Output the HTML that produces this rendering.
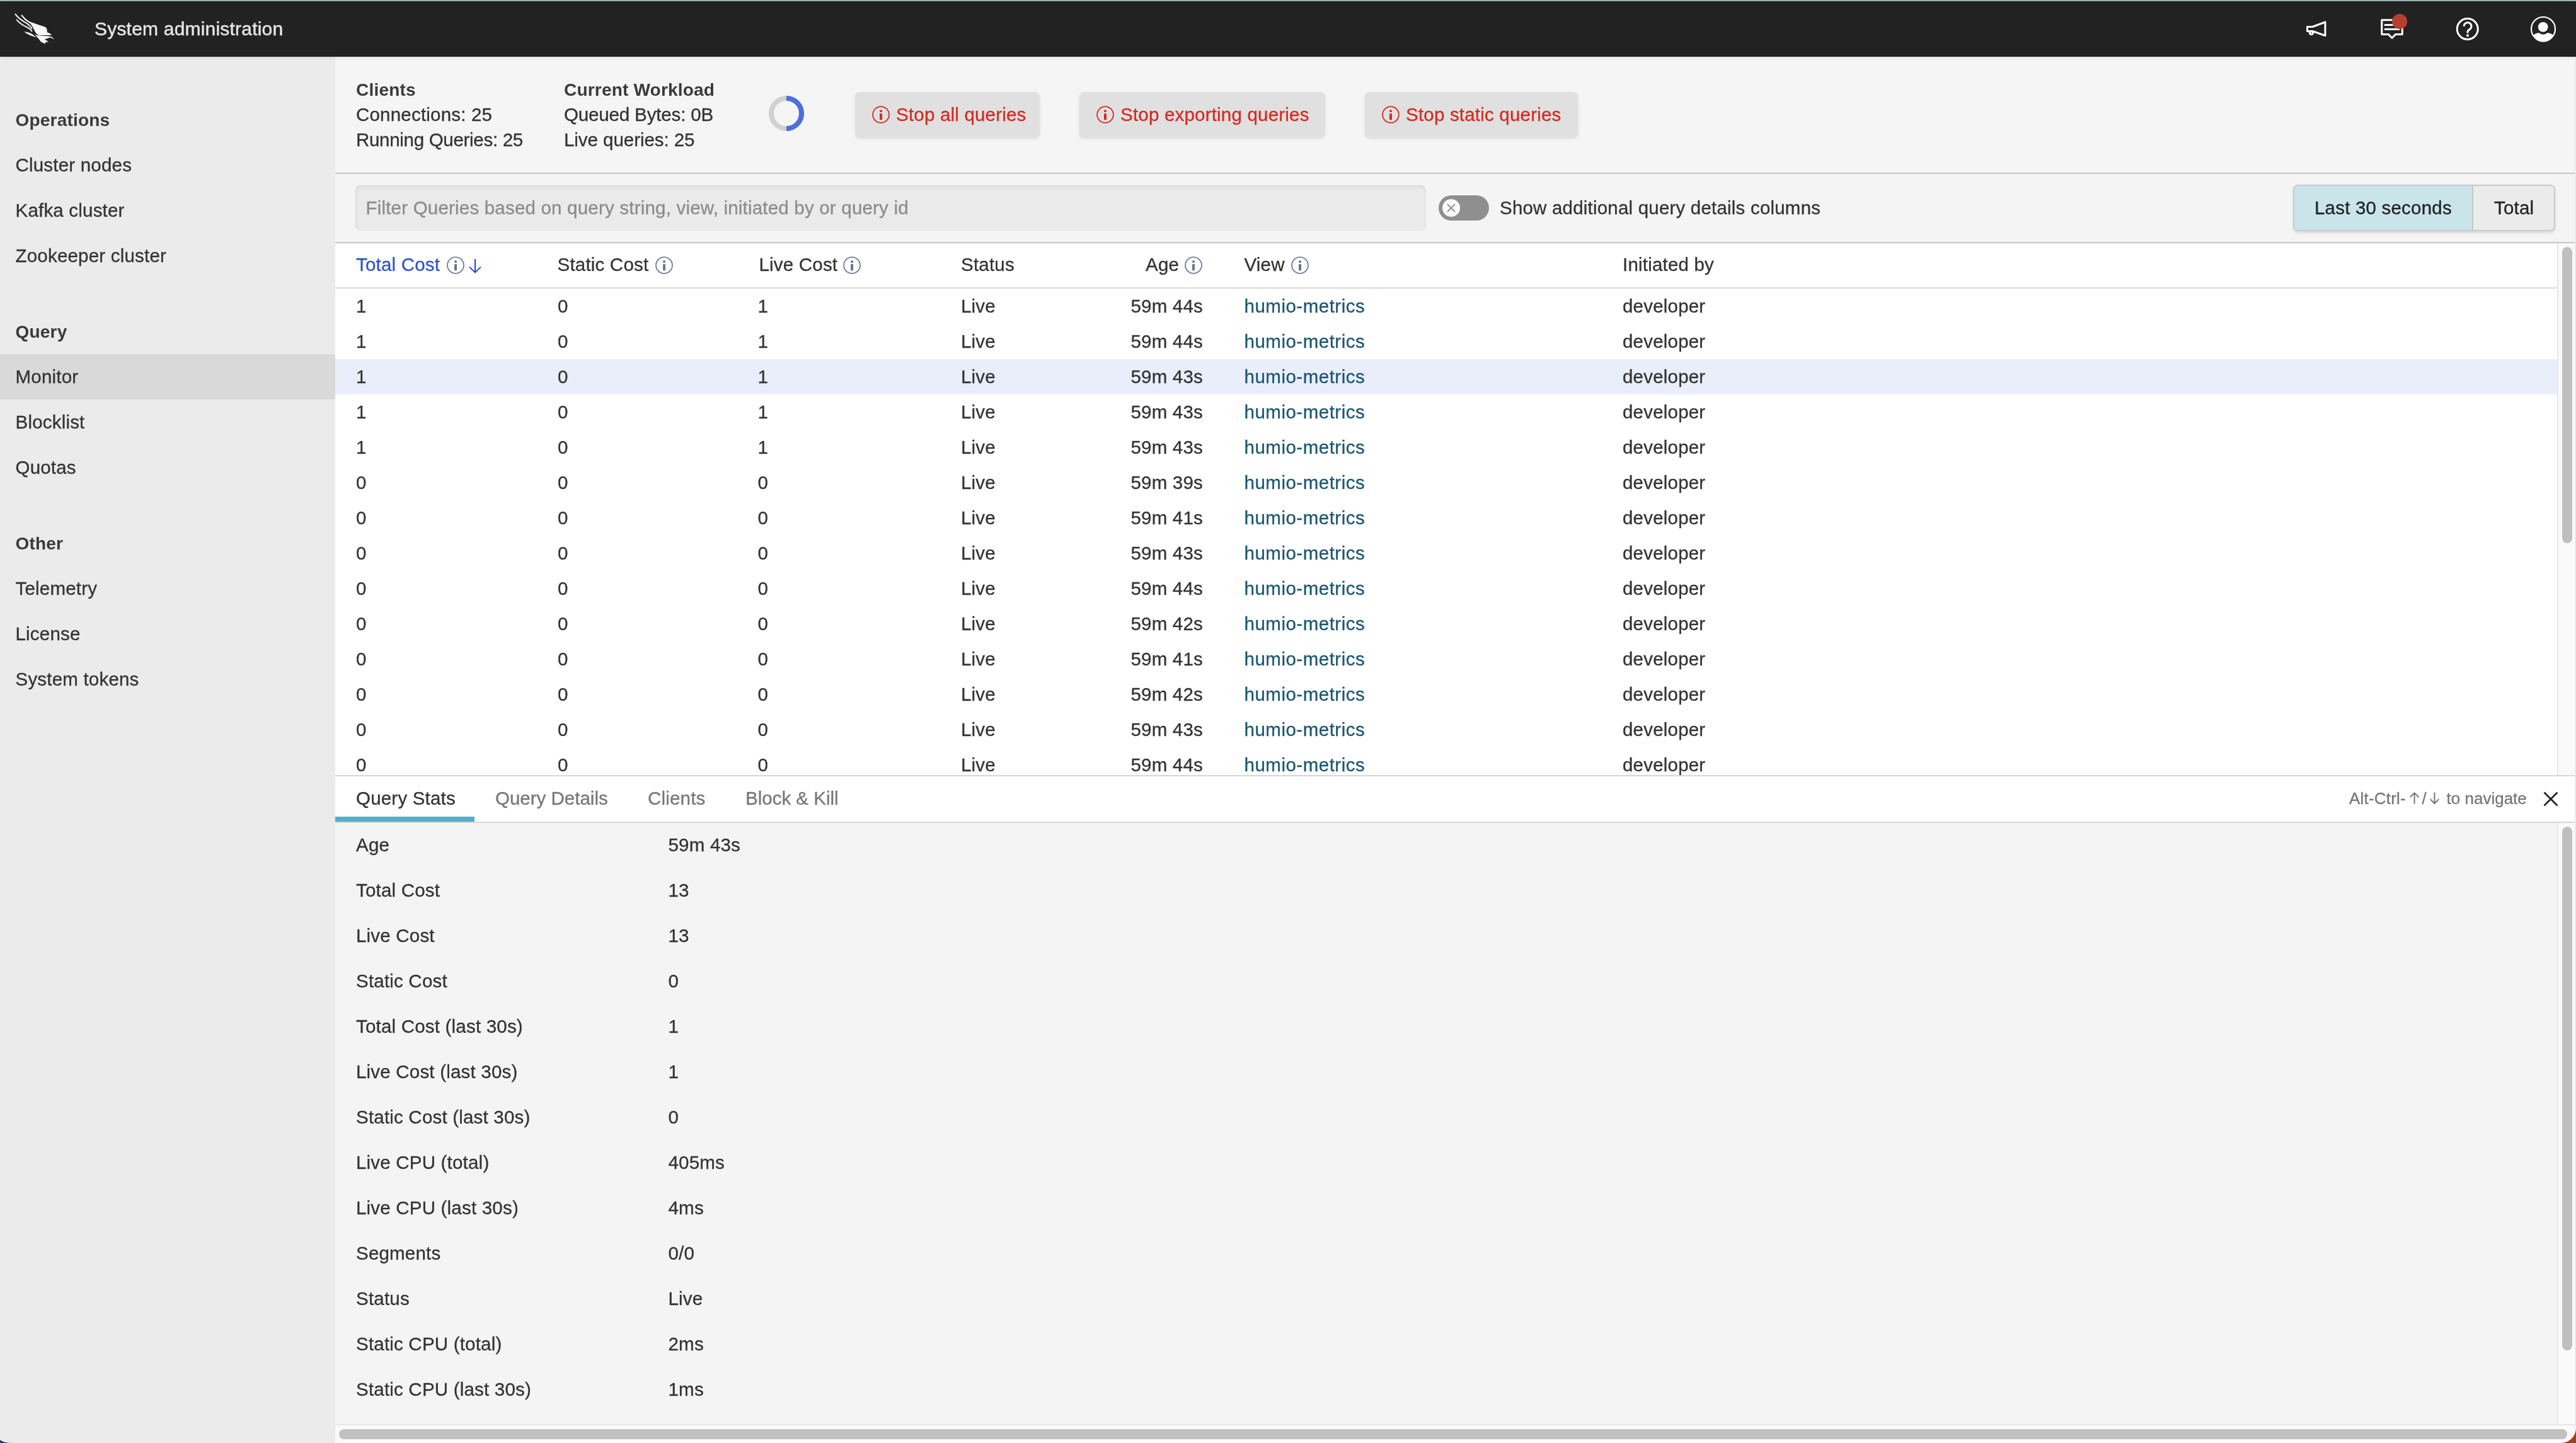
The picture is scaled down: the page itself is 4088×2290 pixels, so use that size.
<!DOCTYPE html>
<html><head><meta charset="utf-8"><title>System administration</title><style>
*{box-sizing:border-box;margin:0;padding:0}
html,body{width:4088px;height:2290px;overflow:hidden;background:#f5f5f5;font-family:"Liberation Sans",sans-serif;color:#333;font-size:29.5px;letter-spacing:0.2px}
.a{position:absolute}
.t{position:absolute;white-space:nowrap;-webkit-text-stroke:0.3px currentColor}
svg{position:absolute;overflow:visible}
</style></head><body>
<div id="root" style="position:absolute;left:0;top:0;width:4088px;height:2290px;overflow:hidden;will-change:transform">
<div class="a" style="left:0;top:0;width:4088px;height:2px;background:#a0b7ba"></div>
<div class="a" style="left:0;top:90px;width:532px;height:2200px;background:#ebebeb"></div>
<div class="a" style="left:532px;top:90px;width:3556px;height:184px;background:#f5f5f5"></div>
<div class="a" style="left:532px;top:274px;width:3556px;height:2px;background:#c6c6c6"></div>
<div class="a" style="left:532px;top:276px;width:3556px;height:108px;background:#f4f4f4"></div>
<div class="a" style="left:532px;top:384px;width:3556px;height:2px;background:#c6c6c6"></div>
<div class="a" style="left:532px;top:386px;width:3556px;height:844px;background:#fff"></div>
<div class="a" style="left:532px;top:456px;width:3526px;height:2px;background:#dcdcdc"></div>
<div class="a" style="left:532px;top:570px;width:3526px;height:56px;background:#eaeefb"></div>
<div class="a" style="left:4058px;top:386px;width:30px;height:844px;background:#fafafa;border-left:2px solid #e6e6e6"></div>
<div class="a" style="left:4066px;top:392px;width:16px;height:470px;background:#bfbfbf;border-radius:8px"></div>
<div class="a" style="left:532px;top:1230px;width:3556px;height:2px;background:#d6d6d6"></div>
<div class="a" style="left:532px;top:1232px;width:3556px;height:72px;background:#fff"></div>
<div class="a" style="left:532px;top:1304px;width:3556px;height:2px;background:#d6d6d6"></div>
<div class="a" style="left:532px;top:1296px;width:221px;height:8px;background:#55adc8"></div>
<div class="a" style="left:532px;top:1306px;width:3556px;height:954px;background:#f4f4f4"></div>
<div class="a" style="left:4058px;top:1306px;width:30px;height:954px;background:#fafafa;border-left:2px solid #e6e6e6"></div>
<div class="a" style="left:4066px;top:1312px;width:16px;height:831px;background:#bfbfbf;border-radius:8px"></div>
<div class="a" style="left:532px;top:2260px;width:3556px;height:30px;background:#fafafa;border-top:2px solid #e6e6e6"></div>
<div class="a" style="left:538px;top:2268px;width:3536px;height:16px;background:#c1c1c1;border-radius:8px"></div>
<div class="a" style="left:4086px;top:90px;width:2px;height:2176px;background:#ebebeb"></div>
<div class="a" style="left:0;top:2px;width:4088px;height:88px;background:#222;border-top:1px solid #1b1b1b;border-bottom:1px solid #161616;box-shadow:0 1px 6px rgba(0,0,0,.13)"></div>
<div class="t" style="left:150px;top:15.61px;font-size:30px;line-height:60px;height:60px;color:#e6e6e6;-webkit-text-stroke:0.45px #e6e6e6;letter-spacing:0.2px">System administration</div>

<svg style="left:16px;top:16px" width="80" height="60" viewBox="0 0 1924 1443" fill="#f8f8f8">
<g fill="none" stroke="#f8f8f8" stroke-linecap="round">
<path d="M200,155 Q330,330 560,460 Q760,570 825,700" stroke-width="48"/>
<path d="M445,200 Q540,340 700,440 Q800,500 860,530" stroke-width="50"/>
<path d="M255,375 Q400,540 620,640 Q770,710 830,805" stroke-width="46"/>
</g>
<path d="M720,430 Q1000,530 1350,650 Q1420,700 1415,850 Q1530,880 1600,950 Q1440,960 1120,960 Q1010,940 950,820 Q870,620 720,430 Z"/>
<path d="M940,925 Q1060,990 1450,990 Q1570,1000 1620,1040 Q1665,1090 1680,1125 Q1610,1060 1540,1045 Q1400,1080 1310,1130 Q1440,1160 1465,1235 Q1400,1205 1345,1225 Q1355,1270 1335,1295 Q1250,1240 1180,1215 Q1100,1100 940,925 Z"/>
<path d="M530,815 Q720,850 820,900 Q920,960 1005,1050 Q880,1000 760,960 Q620,900 530,815 Z"/>
</svg>
<svg style="left:0;top:0" width="4088" height="90" viewBox="0 0 4088 90" fill="none" stroke="#fff" stroke-width="3" stroke-linejoin="round">
<path d="M3661.5,42.5 H3670 L3690,35 V56.5 L3670,49.5 H3661.5 Z"/>
<ellipse cx="3668" cy="52.3" rx="2.6" ry="2.2"/>
<path d="M3779.8,31.7 H3812.3 V54.4 H3801.8 L3796,60.2 L3790.2,54.4 H3779.8 Z"/>
<line x1="3783.8" y1="39.6" x2="3800" y2="39.6"/>
<line x1="3783.8" y1="46.4" x2="3808.3" y2="46.4"/>
<circle cx="3915.8" cy="46" r="16.5"/>
<path d="M3910.2,41.8 A5.9,5.9 0 1 1 3919.6,46.4 Q3916,48.6 3916,51 V52.6"/>
<circle cx="4036" cy="46" r="19" stroke-width="2.2"/>
</svg>
<svg style="left:0;top:0" width="4088" height="90" viewBox="0 0 4088 90" fill="#fff">
<rect x="3914.2" y="54.6" width="3.6" height="3.6"/>
<circle cx="3808.1" cy="34" r="12.1" fill="#b5402f"/>
<circle cx="4035.7" cy="42.9" r="7.9"/>
<path d="M4019.4,56.3 Q4024,52.5 4029,52 Q4036,57.5 4043,52 Q4048,52.5 4052.6,56.3 A18.4,18.4 0 0 1 4019.4,56.3 Z"/>
</svg>
<div class="t" style="left:24.5px;top:161.30px;font-size:28px;line-height:60px;height:60px;font-weight:700;-webkit-text-stroke:0;color:#3a3a3a">Operations</div>

<div class="t" style="left:24.5px;top:231.78px;font-size:29.5px;line-height:60px;height:60px">Cluster nodes</div>

<div class="t" style="left:24.5px;top:303.78px;font-size:29.5px;line-height:60px;height:60px">Kafka cluster</div>

<div class="t" style="left:24.5px;top:375.78px;font-size:29.5px;line-height:60px;height:60px">Zookeeper cluster</div>

<div class="t" style="left:24.5px;top:497.30px;font-size:28px;line-height:60px;height:60px;font-weight:700;-webkit-text-stroke:0;color:#3a3a3a">Query</div>

<div class="a" style="left:0;top:562px;width:532px;height:72px;background:#d9d9d9"></div>
<div class="t" style="left:24.5px;top:567.78px;font-size:29.5px;line-height:60px;height:60px">Monitor</div>

<div class="t" style="left:24.5px;top:639.78px;font-size:29.5px;line-height:60px;height:60px">Blocklist</div>

<div class="t" style="left:24.5px;top:711.78px;font-size:29.5px;line-height:60px;height:60px">Quotas</div>

<div class="t" style="left:24.5px;top:833.30px;font-size:28px;line-height:60px;height:60px;font-weight:700;-webkit-text-stroke:0;color:#3a3a3a">Other</div>

<div class="t" style="left:24.5px;top:903.78px;font-size:29.5px;line-height:60px;height:60px">Telemetry</div>

<div class="t" style="left:24.5px;top:975.78px;font-size:29.5px;line-height:60px;height:60px">License</div>

<div class="t" style="left:24.5px;top:1047.78px;font-size:29.5px;line-height:60px;height:60px">System tokens</div>

<div class="t" style="left:565px;top:113.30px;font-size:28px;line-height:60px;height:60px;font-weight:700;-webkit-text-stroke:0;color:#3a3a3a">Clients</div>

<div class="t" style="left:565px;top:151.78px;font-size:29.5px;line-height:60px;height:60px">Connections: 25</div>

<div class="t" style="left:565px;top:191.78px;font-size:29.5px;line-height:60px;height:60px;letter-spacing:-0.3px">Running Queries: 25</div>

<div class="t" style="left:895px;top:113.30px;font-size:28px;line-height:60px;height:60px;font-weight:700;-webkit-text-stroke:0;color:#3a3a3a">Current Workload</div>

<div class="t" style="left:895px;top:151.78px;font-size:29.5px;line-height:60px;height:60px;letter-spacing:-0.15px">Queued Bytes: 0B</div>

<div class="t" style="left:895px;top:191.78px;font-size:29.5px;line-height:60px;height:60px;letter-spacing:-0.05px">Live queries: 25</div>

<svg style="left:1210px;top:140px" width="80" height="80" viewBox="1210 140 80 80" fill="none" stroke-width="8">
<circle cx="1248" cy="180" r="24" stroke="#d1d1d1"/>
<path d="M1248,156 A24,24 0 0 1 1248,204" stroke="#4b6fdb"/>
</svg>
<div class="a" style="left:1357px;top:146px;width:293px;height:72px;background:#e0e0e0;border-radius:8px;box-shadow:0 2px 4px rgba(0,0,0,.11)"></div>
<svg style="left:1382px;top:166px" width="32" height="32" viewBox="1382 166 32 32"><circle cx="1398" cy="182" r="12.9" fill="none" stroke="#d42a20" stroke-width="1.8"/><circle cx="1398" cy="176.2" r="2" fill="#d42a20"/><rect x="1396" y="180.2" width="4" height="10" fill="#d42a20"/></svg>

<div class="t" style="left:1422px;top:151.78px;font-size:29.5px;line-height:60px;height:60px;color:#d42a20">Stop all queries</div>

<div class="a" style="left:1713px;top:146px;width:390px;height:72px;background:#e0e0e0;border-radius:8px;box-shadow:0 2px 4px rgba(0,0,0,.11)"></div>
<svg style="left:1738px;top:166px" width="32" height="32" viewBox="1738 166 32 32"><circle cx="1754" cy="182" r="12.9" fill="none" stroke="#d42a20" stroke-width="1.8"/><circle cx="1754" cy="176.2" r="2" fill="#d42a20"/><rect x="1752" y="180.2" width="4" height="10" fill="#d42a20"/></svg>

<div class="t" style="left:1778px;top:151.78px;font-size:29.5px;line-height:60px;height:60px;color:#d42a20">Stop exporting queries</div>

<div class="a" style="left:2166px;top:146px;width:338px;height:72px;background:#e0e0e0;border-radius:8px;box-shadow:0 2px 4px rgba(0,0,0,.11)"></div>
<svg style="left:2191px;top:166px" width="32" height="32" viewBox="2191 166 32 32"><circle cx="2207" cy="182" r="12.9" fill="none" stroke="#d42a20" stroke-width="1.8"/><circle cx="2207" cy="176.2" r="2" fill="#d42a20"/><rect x="2205" y="180.2" width="4" height="10" fill="#d42a20"/></svg>

<div class="t" style="left:2231px;top:151.78px;font-size:29.5px;line-height:60px;height:60px;color:#d42a20">Stop static queries</div>

<div class="a" style="left:564px;top:294px;width:1699px;height:72px;background:#eaeaea;border-radius:8px;box-shadow:inset 1px 3px 6px rgba(0,0,0,.08)"></div>
<div class="t" style="left:580.5px;top:299.78px;font-size:29.5px;line-height:60px;height:60px;color:#8c8c8c">Filter Queries based on query string, view, initiated by or query id</div>

<div class="a" style="left:2283px;top:310px;width:80px;height:40px;background:#8f8f8f;border-radius:20px"></div>
<svg style="left:2283px;top:310px" width="80" height="40" viewBox="2283 310 80 40">
<circle cx="2303" cy="330" r="14" fill="#fafafa"/>
<path d="M2297,324 L2309,336 M2309,324 L2297,336" stroke="#8f8f8f" stroke-width="1.8"/>
</svg>
<div class="t" style="left:2380px;top:299.78px;font-size:29.5px;line-height:60px;height:60px">Show additional query details columns</div>

<div class="a" style="left:3639px;top:293px;width:416px;height:74px;border:2px solid #c9c9c9;border-radius:8px;background:#ebebeb;box-shadow:0 3px 4px rgba(0,0,0,.10);overflow:hidden"><div class="a" style="left:0;top:0;width:284px;height:70px;background:#c9e5ea;border-right:2px solid #c9c9c9"></div></div>
<div class="t" style="left:3673px;top:299.78px;font-size:29.5px;line-height:60px;height:60px;color:#222">Last 30 seconds</div>

<div class="t" style="left:3958px;top:299.78px;font-size:29.5px;line-height:60px;height:60px;color:#222">Total</div>

<div class="t" style="left:565px;top:389.78px;font-size:29.5px;line-height:60px;height:60px;color:#2f55c8">Total Cost</div>

<svg style="left:707px;top:405px" width="32" height="32" viewBox="707 405 32 32"><circle cx="723" cy="421" r="13" fill="none" stroke="#6b7390" stroke-width="1.7"/><circle cx="723" cy="415.2" r="2" fill="#6b7390"/><rect x="721" y="419.2" width="4" height="10" fill="#6b7390"/></svg>

<svg style="left:740px;top:405px" width="30" height="32" viewBox="740 405 30 32" fill="none" stroke="#2446c5" stroke-width="2">
<path d="M754,411 V432 M745,423.6 L754,432.4 L763,423.6"/></svg>
<div class="t" style="left:884.5px;top:389.78px;font-size:29.5px;line-height:60px;height:60px">Static Cost</div>

<svg style="left:1038px;top:405px" width="32" height="32" viewBox="1038 405 32 32"><circle cx="1054" cy="421" r="13" fill="none" stroke="#6b7390" stroke-width="1.7"/><circle cx="1054" cy="415.2" r="2" fill="#6b7390"/><rect x="1052" y="419.2" width="4" height="10" fill="#6b7390"/></svg>

<div class="t" style="left:1204.5px;top:389.78px;font-size:29.5px;line-height:60px;height:60px">Live Cost</div>

<svg style="left:1336px;top:405px" width="32" height="32" viewBox="1336 405 32 32"><circle cx="1352" cy="421" r="13" fill="none" stroke="#6b7390" stroke-width="1.7"/><circle cx="1352" cy="415.2" r="2" fill="#6b7390"/><rect x="1350" y="419.2" width="4" height="10" fill="#6b7390"/></svg>

<div class="t" style="left:1525px;top:389.78px;font-size:29.5px;line-height:60px;height:60px">Status</div>

<div class="t" style="left:1818px;top:389.78px;font-size:29.5px;line-height:60px;height:60px">Age</div>

<svg style="left:1878px;top:405px" width="32" height="32" viewBox="1878 405 32 32"><circle cx="1894" cy="421" r="13" fill="none" stroke="#6b7390" stroke-width="1.7"/><circle cx="1894" cy="415.2" r="2" fill="#6b7390"/><rect x="1892" y="419.2" width="4" height="10" fill="#6b7390"/></svg>

<div class="t" style="left:1974.5px;top:389.78px;font-size:29.5px;line-height:60px;height:60px">View</div>

<svg style="left:2047px;top:405px" width="32" height="32" viewBox="2047 405 32 32"><circle cx="2063" cy="421" r="13" fill="none" stroke="#6b7390" stroke-width="1.7"/><circle cx="2063" cy="415.2" r="2" fill="#6b7390"/><rect x="2061" y="419.2" width="4" height="10" fill="#6b7390"/></svg>

<div class="t" style="left:2575px;top:389.78px;font-size:29.5px;line-height:60px;height:60px">Initiated by</div>

<div class="a" style="left:0;top:458px;width:4058px;height:772px;overflow:hidden"><div class="a" style="left:0;top:-458px;width:4088px;height:2290px"><div class="t" style="left:565px;top:455.78px;font-size:29.5px;line-height:60px;height:60px">1</div>
<div class="t" style="left:885px;top:455.78px;font-size:29.5px;line-height:60px;height:60px">0</div>
<div class="t" style="left:1202.5px;top:455.78px;font-size:29.5px;line-height:60px;height:60px">1</div>
<div class="t" style="left:1525px;top:455.78px;font-size:29.5px;line-height:60px;height:60px">Live</div>
<div class="t" style="right:2179px;top:455.78px;font-size:29.5px;line-height:60px;height:60px;text-align:right">59m 44s</div>
<div class="t" style="left:1974.5px;top:455.78px;font-size:29.5px;line-height:60px;height:60px;color:#1c5770;letter-spacing:0.5px">humio-metrics</div>
<div class="t" style="left:2575px;top:455.78px;font-size:29.5px;line-height:60px;height:60px">developer</div>
<div class="t" style="left:565px;top:511.78px;font-size:29.5px;line-height:60px;height:60px">1</div>
<div class="t" style="left:885px;top:511.78px;font-size:29.5px;line-height:60px;height:60px">0</div>
<div class="t" style="left:1202.5px;top:511.78px;font-size:29.5px;line-height:60px;height:60px">1</div>
<div class="t" style="left:1525px;top:511.78px;font-size:29.5px;line-height:60px;height:60px">Live</div>
<div class="t" style="right:2179px;top:511.78px;font-size:29.5px;line-height:60px;height:60px;text-align:right">59m 44s</div>
<div class="t" style="left:1974.5px;top:511.78px;font-size:29.5px;line-height:60px;height:60px;color:#1c5770;letter-spacing:0.5px">humio-metrics</div>
<div class="t" style="left:2575px;top:511.78px;font-size:29.5px;line-height:60px;height:60px">developer</div>
<div class="t" style="left:565px;top:567.78px;font-size:29.5px;line-height:60px;height:60px">1</div>
<div class="t" style="left:885px;top:567.78px;font-size:29.5px;line-height:60px;height:60px">0</div>
<div class="t" style="left:1202.5px;top:567.78px;font-size:29.5px;line-height:60px;height:60px">1</div>
<div class="t" style="left:1525px;top:567.78px;font-size:29.5px;line-height:60px;height:60px">Live</div>
<div class="t" style="right:2179px;top:567.78px;font-size:29.5px;line-height:60px;height:60px;text-align:right">59m 43s</div>
<div class="t" style="left:1974.5px;top:567.78px;font-size:29.5px;line-height:60px;height:60px;color:#1c5770;letter-spacing:0.5px">humio-metrics</div>
<div class="t" style="left:2575px;top:567.78px;font-size:29.5px;line-height:60px;height:60px">developer</div>
<div class="t" style="left:565px;top:623.78px;font-size:29.5px;line-height:60px;height:60px">1</div>
<div class="t" style="left:885px;top:623.78px;font-size:29.5px;line-height:60px;height:60px">0</div>
<div class="t" style="left:1202.5px;top:623.78px;font-size:29.5px;line-height:60px;height:60px">1</div>
<div class="t" style="left:1525px;top:623.78px;font-size:29.5px;line-height:60px;height:60px">Live</div>
<div class="t" style="right:2179px;top:623.78px;font-size:29.5px;line-height:60px;height:60px;text-align:right">59m 43s</div>
<div class="t" style="left:1974.5px;top:623.78px;font-size:29.5px;line-height:60px;height:60px;color:#1c5770;letter-spacing:0.5px">humio-metrics</div>
<div class="t" style="left:2575px;top:623.78px;font-size:29.5px;line-height:60px;height:60px">developer</div>
<div class="t" style="left:565px;top:679.78px;font-size:29.5px;line-height:60px;height:60px">1</div>
<div class="t" style="left:885px;top:679.78px;font-size:29.5px;line-height:60px;height:60px">0</div>
<div class="t" style="left:1202.5px;top:679.78px;font-size:29.5px;line-height:60px;height:60px">1</div>
<div class="t" style="left:1525px;top:679.78px;font-size:29.5px;line-height:60px;height:60px">Live</div>
<div class="t" style="right:2179px;top:679.78px;font-size:29.5px;line-height:60px;height:60px;text-align:right">59m 43s</div>
<div class="t" style="left:1974.5px;top:679.78px;font-size:29.5px;line-height:60px;height:60px;color:#1c5770;letter-spacing:0.5px">humio-metrics</div>
<div class="t" style="left:2575px;top:679.78px;font-size:29.5px;line-height:60px;height:60px">developer</div>
<div class="t" style="left:565px;top:735.78px;font-size:29.5px;line-height:60px;height:60px">0</div>
<div class="t" style="left:885px;top:735.78px;font-size:29.5px;line-height:60px;height:60px">0</div>
<div class="t" style="left:1202.5px;top:735.78px;font-size:29.5px;line-height:60px;height:60px">0</div>
<div class="t" style="left:1525px;top:735.78px;font-size:29.5px;line-height:60px;height:60px">Live</div>
<div class="t" style="right:2179px;top:735.78px;font-size:29.5px;line-height:60px;height:60px;text-align:right">59m 39s</div>
<div class="t" style="left:1974.5px;top:735.78px;font-size:29.5px;line-height:60px;height:60px;color:#1c5770;letter-spacing:0.5px">humio-metrics</div>
<div class="t" style="left:2575px;top:735.78px;font-size:29.5px;line-height:60px;height:60px">developer</div>
<div class="t" style="left:565px;top:791.78px;font-size:29.5px;line-height:60px;height:60px">0</div>
<div class="t" style="left:885px;top:791.78px;font-size:29.5px;line-height:60px;height:60px">0</div>
<div class="t" style="left:1202.5px;top:791.78px;font-size:29.5px;line-height:60px;height:60px">0</div>
<div class="t" style="left:1525px;top:791.78px;font-size:29.5px;line-height:60px;height:60px">Live</div>
<div class="t" style="right:2179px;top:791.78px;font-size:29.5px;line-height:60px;height:60px;text-align:right">59m 41s</div>
<div class="t" style="left:1974.5px;top:791.78px;font-size:29.5px;line-height:60px;height:60px;color:#1c5770;letter-spacing:0.5px">humio-metrics</div>
<div class="t" style="left:2575px;top:791.78px;font-size:29.5px;line-height:60px;height:60px">developer</div>
<div class="t" style="left:565px;top:847.78px;font-size:29.5px;line-height:60px;height:60px">0</div>
<div class="t" style="left:885px;top:847.78px;font-size:29.5px;line-height:60px;height:60px">0</div>
<div class="t" style="left:1202.5px;top:847.78px;font-size:29.5px;line-height:60px;height:60px">0</div>
<div class="t" style="left:1525px;top:847.78px;font-size:29.5px;line-height:60px;height:60px">Live</div>
<div class="t" style="right:2179px;top:847.78px;font-size:29.5px;line-height:60px;height:60px;text-align:right">59m 43s</div>
<div class="t" style="left:1974.5px;top:847.78px;font-size:29.5px;line-height:60px;height:60px;color:#1c5770;letter-spacing:0.5px">humio-metrics</div>
<div class="t" style="left:2575px;top:847.78px;font-size:29.5px;line-height:60px;height:60px">developer</div>
<div class="t" style="left:565px;top:903.78px;font-size:29.5px;line-height:60px;height:60px">0</div>
<div class="t" style="left:885px;top:903.78px;font-size:29.5px;line-height:60px;height:60px">0</div>
<div class="t" style="left:1202.5px;top:903.78px;font-size:29.5px;line-height:60px;height:60px">0</div>
<div class="t" style="left:1525px;top:903.78px;font-size:29.5px;line-height:60px;height:60px">Live</div>
<div class="t" style="right:2179px;top:903.78px;font-size:29.5px;line-height:60px;height:60px;text-align:right">59m 44s</div>
<div class="t" style="left:1974.5px;top:903.78px;font-size:29.5px;line-height:60px;height:60px;color:#1c5770;letter-spacing:0.5px">humio-metrics</div>
<div class="t" style="left:2575px;top:903.78px;font-size:29.5px;line-height:60px;height:60px">developer</div>
<div class="t" style="left:565px;top:959.78px;font-size:29.5px;line-height:60px;height:60px">0</div>
<div class="t" style="left:885px;top:959.78px;font-size:29.5px;line-height:60px;height:60px">0</div>
<div class="t" style="left:1202.5px;top:959.78px;font-size:29.5px;line-height:60px;height:60px">0</div>
<div class="t" style="left:1525px;top:959.78px;font-size:29.5px;line-height:60px;height:60px">Live</div>
<div class="t" style="right:2179px;top:959.78px;font-size:29.5px;line-height:60px;height:60px;text-align:right">59m 42s</div>
<div class="t" style="left:1974.5px;top:959.78px;font-size:29.5px;line-height:60px;height:60px;color:#1c5770;letter-spacing:0.5px">humio-metrics</div>
<div class="t" style="left:2575px;top:959.78px;font-size:29.5px;line-height:60px;height:60px">developer</div>
<div class="t" style="left:565px;top:1015.78px;font-size:29.5px;line-height:60px;height:60px">0</div>
<div class="t" style="left:885px;top:1015.78px;font-size:29.5px;line-height:60px;height:60px">0</div>
<div class="t" style="left:1202.5px;top:1015.78px;font-size:29.5px;line-height:60px;height:60px">0</div>
<div class="t" style="left:1525px;top:1015.78px;font-size:29.5px;line-height:60px;height:60px">Live</div>
<div class="t" style="right:2179px;top:1015.78px;font-size:29.5px;line-height:60px;height:60px;text-align:right">59m 41s</div>
<div class="t" style="left:1974.5px;top:1015.78px;font-size:29.5px;line-height:60px;height:60px;color:#1c5770;letter-spacing:0.5px">humio-metrics</div>
<div class="t" style="left:2575px;top:1015.78px;font-size:29.5px;line-height:60px;height:60px">developer</div>
<div class="t" style="left:565px;top:1071.78px;font-size:29.5px;line-height:60px;height:60px">0</div>
<div class="t" style="left:885px;top:1071.78px;font-size:29.5px;line-height:60px;height:60px">0</div>
<div class="t" style="left:1202.5px;top:1071.78px;font-size:29.5px;line-height:60px;height:60px">0</div>
<div class="t" style="left:1525px;top:1071.78px;font-size:29.5px;line-height:60px;height:60px">Live</div>
<div class="t" style="right:2179px;top:1071.78px;font-size:29.5px;line-height:60px;height:60px;text-align:right">59m 42s</div>
<div class="t" style="left:1974.5px;top:1071.78px;font-size:29.5px;line-height:60px;height:60px;color:#1c5770;letter-spacing:0.5px">humio-metrics</div>
<div class="t" style="left:2575px;top:1071.78px;font-size:29.5px;line-height:60px;height:60px">developer</div>
<div class="t" style="left:565px;top:1127.78px;font-size:29.5px;line-height:60px;height:60px">0</div>
<div class="t" style="left:885px;top:1127.78px;font-size:29.5px;line-height:60px;height:60px">0</div>
<div class="t" style="left:1202.5px;top:1127.78px;font-size:29.5px;line-height:60px;height:60px">0</div>
<div class="t" style="left:1525px;top:1127.78px;font-size:29.5px;line-height:60px;height:60px">Live</div>
<div class="t" style="right:2179px;top:1127.78px;font-size:29.5px;line-height:60px;height:60px;text-align:right">59m 43s</div>
<div class="t" style="left:1974.5px;top:1127.78px;font-size:29.5px;line-height:60px;height:60px;color:#1c5770;letter-spacing:0.5px">humio-metrics</div>
<div class="t" style="left:2575px;top:1127.78px;font-size:29.5px;line-height:60px;height:60px">developer</div>
<div class="t" style="left:565px;top:1183.78px;font-size:29.5px;line-height:60px;height:60px">0</div>
<div class="t" style="left:885px;top:1183.78px;font-size:29.5px;line-height:60px;height:60px">0</div>
<div class="t" style="left:1202.5px;top:1183.78px;font-size:29.5px;line-height:60px;height:60px">0</div>
<div class="t" style="left:1525px;top:1183.78px;font-size:29.5px;line-height:60px;height:60px">Live</div>
<div class="t" style="right:2179px;top:1183.78px;font-size:29.5px;line-height:60px;height:60px;text-align:right">59m 44s</div>
<div class="t" style="left:1974.5px;top:1183.78px;font-size:29.5px;line-height:60px;height:60px;color:#1c5770;letter-spacing:0.5px">humio-metrics</div>
<div class="t" style="left:2575px;top:1183.78px;font-size:29.5px;line-height:60px;height:60px">developer</div>
</div></div>
<div class="t" style="left:565px;top:1236.78px;font-size:29.5px;line-height:60px;height:60px;color:#333">Query Stats</div>

<div class="t" style="left:786px;top:1236.78px;font-size:29.5px;line-height:60px;height:60px;color:#777;letter-spacing:0">Query Details</div>

<div class="t" style="left:1028px;top:1236.78px;font-size:29.5px;line-height:60px;height:60px;color:#777">Clients</div>

<div class="t" style="left:1183px;top:1236.78px;font-size:29.5px;line-height:60px;height:60px;color:#777;letter-spacing:0">Block &amp; Kill</div>

<div class="t" style="left:3728px;top:1236.99px;font-size:26px;line-height:60px;height:60px;color:#777;letter-spacing:0.2px">Alt-Ctrl-</div>

<div class="t" style="left:3843.5px;top:1236.99px;font-size:26px;line-height:60px;height:60px;color:#777">/</div>

<div class="t" style="left:3882.6px;top:1236.99px;font-size:26px;line-height:60px;height:60px;color:#777;letter-spacing:0">to navigate</div>

<svg style="left:3820px;top:1254px" width="56" height="26" viewBox="3820 1254 56 26" fill="none" stroke="#777" stroke-width="2">
<path d="M3831.6,1258.5 V1275.8 M3824.8,1265 L3831.6,1258.3 L3838.4,1265"/>
<path d="M3863.5,1257.6 V1275 M3856.7,1268.3 L3863.5,1275 L3870.3,1268.3"/></svg>
<svg style="left:4030px;top:1250px" width="36" height="36" viewBox="4030 1250 36 36" fill="none" stroke="#222" stroke-width="2.8">
<path d="M4037.5,1257.5 L4058.5,1278.5 M4058.5,1257.5 L4037.5,1278.5"/></svg>
<div class="t" style="left:565px;top:1310.78px;font-size:29.5px;line-height:60px;height:60px">Age</div>

<div class="t" style="left:1060.5px;top:1310.78px;font-size:29.5px;line-height:60px;height:60px">59m 43s</div>

<div class="t" style="left:565px;top:1382.78px;font-size:29.5px;line-height:60px;height:60px">Total Cost</div>

<div class="t" style="left:1060.5px;top:1382.78px;font-size:29.5px;line-height:60px;height:60px">13</div>

<div class="t" style="left:565px;top:1454.78px;font-size:29.5px;line-height:60px;height:60px">Live Cost</div>

<div class="t" style="left:1060.5px;top:1454.78px;font-size:29.5px;line-height:60px;height:60px">13</div>

<div class="t" style="left:565px;top:1526.78px;font-size:29.5px;line-height:60px;height:60px">Static Cost</div>

<div class="t" style="left:1060.5px;top:1526.78px;font-size:29.5px;line-height:60px;height:60px">0</div>

<div class="t" style="left:565px;top:1598.78px;font-size:29.5px;line-height:60px;height:60px">Total Cost (last 30s)</div>

<div class="t" style="left:1060.5px;top:1598.78px;font-size:29.5px;line-height:60px;height:60px">1</div>

<div class="t" style="left:565px;top:1670.78px;font-size:29.5px;line-height:60px;height:60px">Live Cost (last 30s)</div>

<div class="t" style="left:1060.5px;top:1670.78px;font-size:29.5px;line-height:60px;height:60px">1</div>

<div class="t" style="left:565px;top:1742.78px;font-size:29.5px;line-height:60px;height:60px">Static Cost (last 30s)</div>

<div class="t" style="left:1060.5px;top:1742.78px;font-size:29.5px;line-height:60px;height:60px">0</div>

<div class="t" style="left:565px;top:1814.78px;font-size:29.5px;line-height:60px;height:60px">Live CPU (total)</div>

<div class="t" style="left:1060.5px;top:1814.78px;font-size:29.5px;line-height:60px;height:60px">405ms</div>

<div class="t" style="left:565px;top:1886.78px;font-size:29.5px;line-height:60px;height:60px">Live CPU (last 30s)</div>

<div class="t" style="left:1060.5px;top:1886.78px;font-size:29.5px;line-height:60px;height:60px">4ms</div>

<div class="t" style="left:565px;top:1958.78px;font-size:29.5px;line-height:60px;height:60px">Segments</div>

<div class="t" style="left:1060.5px;top:1958.78px;font-size:29.5px;line-height:60px;height:60px">0/0</div>

<div class="t" style="left:565px;top:2030.78px;font-size:29.5px;line-height:60px;height:60px">Status</div>

<div class="t" style="left:1060.5px;top:2030.78px;font-size:29.5px;line-height:60px;height:60px">Live</div>

<div class="t" style="left:565px;top:2102.78px;font-size:29.5px;line-height:60px;height:60px">Static CPU (total)</div>

<div class="t" style="left:1060.5px;top:2102.78px;font-size:29.5px;line-height:60px;height:60px">2ms</div>

<div class="t" style="left:565px;top:2174.78px;font-size:29.5px;line-height:60px;height:60px">Static CPU (last 30s)</div>

<div class="t" style="left:1060.5px;top:2174.78px;font-size:29.5px;line-height:60px;height:60px">1ms</div>

<svg style="left:0;top:2280px" width="20" height="10" viewBox="0 2280 20 10"><path d="M0,2285 Q5,2289.3 16,2290 L0,2290 Z" fill="#1d3b63"/></svg>
<svg style="left:4058px;top:2260px" width="30" height="30" viewBox="4058 2260 30 30"><path d="M4088,2266 A24,24 0 0 1 4064,2290 L4088,2290 Z" fill="#a0421e"/><path d="M4086.5,2266 A22.5,22.5 0 0 1 4064,2288.5" fill="none" stroke="#fff" stroke-width="1.2"/></svg>
</div></body></html>
